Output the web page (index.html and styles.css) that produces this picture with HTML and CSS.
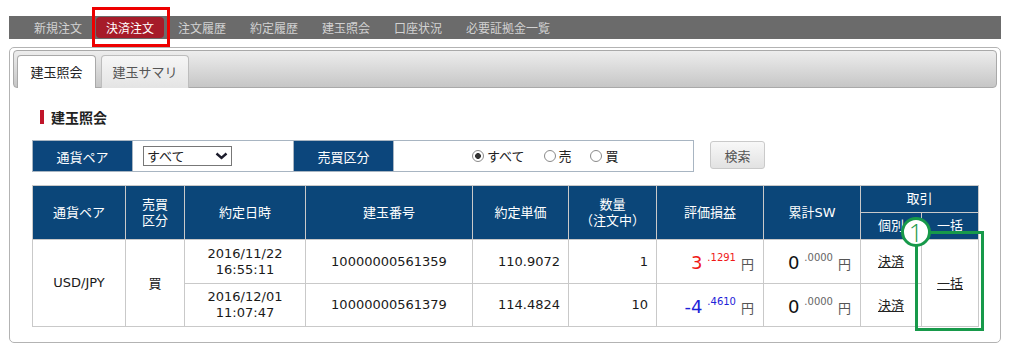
FILE: index.html
```html
<!DOCTYPE html>
<html lang="ja">
<head>
  <meta charset="UTF-8">
  <title>建玉照会</title>
  <link rel="stylesheet" href="styles.css">
</head>
<body>
  <div class="page">
    <ul class="gnav">
      <li>新規注文</li>
      <li class="current">決済注文</li>
      <li>注文履歴</li>
      <li>約定履歴</li>
      <li>建玉照会</li>
      <li>口座状況</li>
      <li>必要証拠金一覧</li>
    </ul>

    <div class="panel">
      <div class="tabbar">
        <span class="tab active">建玉照会</span>
        <span class="tab wide">建玉サマリ</span>
      </div>

      <div class="content">
        <h2 class="ttl">建玉照会</h2>

        <div class="search">
          <table class="filter">
            <tr>
              <th class="f1">通貨ペア</th>
              <td class="f2">
                <span class="sel">
                  <select>
                    <option>すべて</option>
                    <option>USD/JPY</option>
                  </select>
                  <svg class="chev" width="13" height="8" viewBox="0 0 13 8"><polyline points="1.5,1.5 6.5,6 11.5,1.5" fill="none" stroke="#1c1c2c" stroke-width="2.4"/></svg>
                </span>
              </td>
              <th class="f3">売買区分</th>
              <td class="f4">
                <label><input type="radio" name="side" checked>すべて</label>
                <label><input type="radio" name="side">売</label>
                <label><input type="radio" name="side">買</label>
              </td>
            </tr>
          </table>
          <button type="button" class="btn">検索</button>
        </div>

        <table class="list">
          <colgroup>
            <col style="width:93px"><col style="width:59px"><col style="width:121px"><col style="width:167px"><col style="width:96px">
            <col style="width:88px"><col style="width:107px"><col style="width:97px"><col style="width:61px"><col style="width:57px">
          </colgroup>
          <tr class="h1">
            <th rowspan="2">通貨ペア</th>
            <th rowspan="2">売買<br>区分</th>
            <th rowspan="2">約定日時</th>
            <th rowspan="2">建玉番号</th>
            <th rowspan="2">約定単価</th>
            <th rowspan="2">数量<br>（注文中）</th>
            <th rowspan="2">評価損益</th>
            <th rowspan="2">累計SW</th>
            <th colspan="2">取引</th>
          </tr>
          <tr class="h2">
            <th>個別</th>
            <th>一括</th>
          </tr>
          <tr class="r1">
            <td rowspan="2" class="c">USD/JPY</td>
            <td rowspan="2" class="c jp">買</td>
            <td class="c">2016/11/22<br>16:55:11</td>
            <td class="c">10000000561359</td>
            <td class="r">110.9072</td>
            <td class="r">1</td>
            <td class="r pl plus"><span class="big">3</span><span class="dec">.1291</span><span class="yen">円</span></td>
            <td class="r sw"><span class="big">0</span><span class="dec">.0000</span><span class="yen">円</span></td>
            <td class="c"><a href="#">決済</a></td>
            <td rowspan="2" class="c"><a href="#">一括</a></td>
          </tr>
          <tr class="r2">
            <td class="c">2016/12/01<br>11:07:47</td>
            <td class="c">10000000561379</td>
            <td class="r">114.4824</td>
            <td class="r">10</td>
            <td class="r pl minus"><span class="big">-4</span><span class="dec">.4610</span><span class="yen">円</span></td>
            <td class="r sw"><span class="big">0</span><span class="dec">.0000</span><span class="yen">円</span></td>
            <td class="c"><a href="#">決済</a></td>
          </tr>
        </table>
      </div>
    </div>

    <div class="mark-red"></div>
    <div class="mark-green"></div>
    <div class="mark-num">1</div>
  </div>
</body>
</html>
```

FILE: styles.css
```css
body { margin: 0; font-family: "DejaVu Sans", "Noto Sans CJK JP", sans-serif; font-size: 13px; color: #222; background: #fff; }
.page { position: relative; width: 992px; padding: 16px 10px 0 9px; }

/* global nav */
.gnav { display: flex; margin: 0; padding: 1px 0 1px 13px; list-style: none; background: #6b6b6b; height: 21px; }
.gnav li { margin: 0 2px; padding: 0 10px; line-height: 21px; font-family: "Noto Sans CJK JP", sans-serif; font-size: 12px; color: #d2d2d2; border-radius: 4px; }
.gnav li.current { background: #a61b29; color: #fff; }

/* panel + tabs */
.panel { margin-top: 8px; border: 1px solid #b3b3b3; border-radius: 5px; padding: 2px 3px 15px; }
.tabbar { display: flex; align-items: flex-end; gap: 5px; height: 32px; padding: 4px 3px 0; border: 1px solid #a9a9a9; border-radius: 4px; background: linear-gradient(#ededed, #c6c6c6); }
.tab { box-sizing: border-box; width: 79px; height: 33px; margin-bottom: -1px; line-height: 32px; text-align: center; font-family: "Noto Sans CJK JP", sans-serif; font-size: 13px; color: #555; border: 1px solid #bdbdbd; border-bottom: none; border-radius: 4px 4px 0 0; background: linear-gradient(#f6f6f6, #e4e4e4); }
.tab.wide { width: 88px; }
.tab.active { background: #fff; color: #222; border-color: #a9a9a9; }

.content { padding: 21px 19px 0; }
.ttl { margin: 0 0 0 8px; font-family: "Noto Sans CJK JP", sans-serif; font-size: 14px; line-height: 16px; font-weight: bold; color: #222; }
.ttl::before { content: ""; display: inline-block; width: 4px; height: 14px; margin-right: 7px; background: #c0152a; vertical-align: -1px; }

/* search row */
.search { display: flex; align-items: flex-start; margin-top: 15px; }
.filter { border-collapse: collapse; border: 1px solid #a8b5c2; }
.filter th, .filter td { height: 30px; padding: 0; border: 1px solid #a8b5c2; }
.filter th { background: #0c467c; color: #fff; font-weight: normal; font-family: "Noto Sans CJK JP", sans-serif; font-size: 13px; }
.f1 { width: 99px; }
.f2 { width: 150px; padding-left: 10px !important; }
.f3 { width: 99px; }
.f4 { width: 221px; padding-left: 78px !important; font-family: "Noto Sans CJK JP", sans-serif; }
.sel { position: relative; display: inline-block; vertical-align: middle; }
.sel select { appearance: none; -webkit-appearance: none; box-sizing: border-box; width: 89px; height: 20px; margin: 0; padding: 0 0 0 3px; border: 1px solid #777; border-radius: 0; background: #fff; color: #222; font-family: "Noto Sans CJK JP", sans-serif; font-size: 13px; line-height: 18px; }
.chev { position: absolute; right: 4px; top: 6px; pointer-events: none; }
.f4 label { display: inline-flex; align-items: center; gap: 3px; margin-right: 16px; font-size: 13px; color: #222; }
.f4 input[type="radio"] { appearance: none; -webkit-appearance: none; width: 12px; height: 12px; margin: 0; border: 1px solid #8a8a8a; border-radius: 50%; background: #fff; }
.f4 input[type="radio"]:checked { background: radial-gradient(circle, #333 0 2.6px, #fff 3.2px); }
.btn { margin: 1px 0 0 16px; width: 55px; height: 28px; padding: 0; border: 1px solid #cacaca; border-radius: 3px; background: linear-gradient(#f8f8f8, #e2e2e2); color: #555; font-family: "Noto Sans CJK JP", sans-serif; font-size: 13px; }

/* list */
.list { margin-top: 13px; width: 946px; table-layout: fixed; border-collapse: collapse; }
.list th { background: #0b4679; color: #fff; font-weight: normal; font-family: "DejaVu Sans", "Noto Sans CJK JP", sans-serif; font-size: 13px; line-height: 16px; border: 1px solid #c9c9c9; padding: 0; }
.list .h1 th, .list .h2 th { height: 26px; }
.list td { border: 1px solid #c9c9c9; padding: 0 8px; line-height: 16px; color: #1a1a1a; }
.list .r1 td { height: 43px; }
.list .r2 td { height: 42px; }
.list td.c { text-align: center; }
.list td.r { text-align: right; }
.list .jp, .list a { font-family: "Noto Sans CJK JP", sans-serif; }
.list a { color: #222; }
.big { font-size: 18px; }
.dec { font-size: 10px; margin-left: 5px; vertical-align: 8px; }
.yen { margin-left: 5px; color: #555; font-family: "Noto Sans CJK JP", sans-serif; }
.list td.pl, .list td.sw { padding-right: 9px; }
.plus .big, .plus .dec { color: #f01818; }
.minus .big, .minus .dec { color: #1c22d8; }
.sw .big { color: #111; }
.sw .dec { color: #666; }

/* annotations */
.mark-red { position: absolute; left: 92px; top: 7px; box-sizing: border-box; width: 78px; height: 40px; border: 3px solid #ee0000; }
.mark-green { position: absolute; left: 915px; top: 231px; box-sizing: border-box; width: 69px; height: 100px; border: 3px solid #17994a; }
.mark-num { position: absolute; left: 901px; top: 217px; box-sizing: border-box; width: 30px; height: 30px; border: 3px solid #17994a; border-radius: 50%; background: #fff; color: #17994a; font-family: "Open Sans", sans-serif; font-weight: 300; font-size: 25px; line-height: 24px; text-align: center; }
```
